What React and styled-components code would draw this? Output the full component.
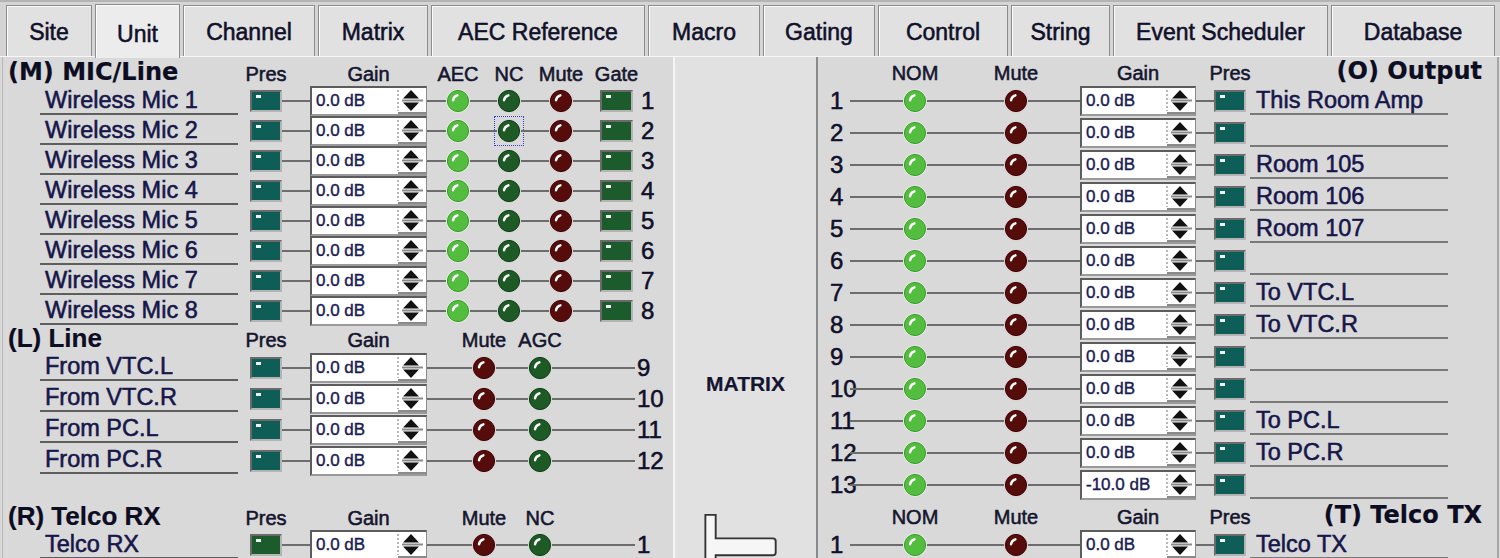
import React from "react";
import styled, { createGlobalStyle } from "styled-components";

const GlobalStyle = createGlobalStyle`
  html, body {
    margin: 0;
    padding: 0;
    background: #d9d9d9;
    overflow: hidden;
  }
  body {
    font-family: "Liberation Sans", Arial, sans-serif;
  }
`;

const TEXT = "#14143a";

const tabs = [
  { name: "Site", w: 86 },
  { name: "Unit", w: 85, active: true },
  { name: "Channel", w: 132 },
  { name: "Matrix", w: 110 },
  { name: "AEC Reference", w: 214 },
  { name: "Macro", w: 112 },
  { name: "Gating", w: 112 },
  { name: "Control", w: 130 },
  { name: "String", w: 99 },
  { name: "Event Scheduler", w: 215 },
  { name: "Database", w: 164 },
];

const micCols = [
  { t: "sq", w: 32, c: "teal", h: "Pres" },
  { t: "wire", w: 28 },
  { t: "gain", w: 117, h: "Gain" },
  { t: "wire", w: 19 },
  { t: "led", w: 24, c: "lime", h: "AEC" },
  { t: "wire", w: 27 },
  { t: "led", w: 24, c: "green", h: "NC" },
  { t: "wire", w: 28 },
  { t: "led", w: 24, c: "red", h: "Mute" },
  { t: "wire", w: 27 },
  { t: "sq", w: 33, c: "gate", h: "Gate" },
];

const lineCols = [
  { t: "sq", w: 32, c: "teal", h: "Pres" },
  { t: "wire", w: 28 },
  { t: "gain", w: 117, h: "Gain" },
  { t: "wire", w: 45 },
  { t: "led", w: 24, c: "red", h: "Mute" },
  { t: "wire", w: 32 },
  { t: "led", w: 24, c: "green", h: "AGC" },
  { t: "wire", w: 83 },
];

const telcoRxCols = [
  { t: "sq", w: 32, c: "gate", h: "Pres" },
  { t: "wire", w: 28 },
  { t: "gain", w: 117, h: "Gain" },
  { t: "wire", w: 45 },
  { t: "led", w: 24, c: "red", h: "Mute" },
  { t: "wire", w: 32 },
  { t: "led", w: 24, c: "green", h: "NC" },
  { t: "wire", w: 83 },
];

const outCols = [
  { t: "num", w: 20 },
  { t: "wire", w: 53 },
  { t: "led", w: 24, c: "lime", h: "NOM" },
  { t: "wire", w: 77 },
  { t: "led", w: 24, c: "red", h: "Mute" },
  { t: "wire", w: 52 },
  { t: "gain", w: 116, h: "Gain" },
  { t: "wire", w: 18 },
  { t: "sq", w: 32, c: "teal", h: "Pres" },
];

const micRows = [1, 2, 3, 4, 5, 6, 7, 8].map((n) => ({
  name: `Wireless Mic ${n}`,
  num: n,
}));

const lineRows = [
  { name: "From VTC.L", num: 9 },
  { name: "From VTC.R", num: 10 },
  { name: "From PC.L", num: 11 },
  { name: "From PC.R", num: 12 },
];

const outRows = [
  "This Room Amp",
  "",
  "Room 105",
  "Room 106",
  "Room 107",
  "",
  "To VTC.L",
  "To VTC.R",
  "",
  "",
  "To PC.L",
  "To PC.R",
  "",
].map((name, i) => ({ name, num: i + 1, gain: i === 12 ? "-10.0 dB" : "0.0 dB" }));

const ledColors = {
  lime: { fill: "#52bd3e", edge: "#3d9a2e", halo: "#e6f0e0" },
  green: { fill: "#1d5a26", edge: "#0f3a16", halo: "#cfd6cf" },
  red: { fill: "#570c0c", edge: "#360505", halo: "#dccdcd" },
};

const squareColors = {
  teal: "#0f5d57",
  gate: "#1c5b2c",
};

/* ---------- window + tabs ---------- */

const Window = styled.div`
  width: 1500px;
  height: 558px;
  overflow: hidden;
  display: flex;
  flex-direction: column;
  background: #d9d9d9;
  color: ${TEXT};
  -webkit-text-stroke: 0.55px;
`;

const TabStrip = styled.div`
  display: flex;
  align-items: flex-end;
  gap: 3px;
  height: 56px;
  box-sizing: border-box;
  padding: 0 0 0 6px;
  background: #d5d5d5;
  border-top: 2px solid #b4b4b4;
  flex-shrink: 0;
`;

const Tab = styled.div`
  width: ${(p) => p.$w}px;
  height: ${(p) => (p.$active ? 54 : 51)}px;
  margin-bottom: ${(p) => (p.$active ? -2 : 0)}px;
  position: relative;
  z-index: ${(p) => (p.$active ? 2 : 1)};
  box-sizing: border-box;
  display: flex;
  align-items: center;
  justify-content: center;
  padding-top: ${(p) => (p.$active ? 6 : 2)}px;
  font-size: 23px;
  color: #10102a;
  background: ${(p) => (p.$active ? "#ececec" : "#e1e1e1")};
  border: 1px solid #8c8c8c;
  border-bottom: none;
  box-shadow: inset 1px 1px 0 #fbfbfb;
`;

const Body = styled.div`
  flex: 1;
  display: flex;
  border-top: 1px solid #f7f7f7;
  min-height: 0;
`;

/* ---------- panels ---------- */

const LeftPanel = styled.div`
  width: 671px;
  margin-left: 2px;
  border-left: 1px solid #b8b8b8;
  box-sizing: border-box;
  display: flex;
  flex-direction: column;
  flex-shrink: 0;
`;

const MatrixPanel = styled.div`
  width: 145px;
  box-sizing: border-box;
  flex-shrink: 0;
  background: #e1e1e1;
  border-left: 2px solid #f4f4f4;
  border-right: 2px solid #8a8a8a;
  display: flex;
  flex-direction: column;
  align-items: center;
  padding-top: 315px;
`;

const MatrixTitle = styled.div`
  font-weight: bold;
  font-size: 21px;
  line-height: 24px;
  color: #151530;
  -webkit-text-stroke: 0.2px;
`;

const TeeShape = styled.svg`
  display: block;
  align-self: flex-start;
  margin: 117px 0 0 26px;
`;

const RightPanel = styled.div`
  flex: 1;
  box-sizing: border-box;
  padding-left: 12px;
  border-right: 2px solid #a6a6a6;
  margin-right: 1px;
  display: flex;
  flex-direction: column;
`;

/* ---------- sections ---------- */

const Section = styled.div`
  display: flex;
  flex-direction: column;
  margin-top: ${(p) => p.$mt || 0}px;
`;

const HeaderRow = styled.div`
  display: flex;
  align-items: flex-end;
  height: ${(p) => p.$h}px;
  padding-left: ${(p) => p.$pl || 0}px;
  flex-shrink: 0;
`;

const Title = styled.div`
  width: ${(p) => (p.$w ? `${p.$w}px` : "auto")};
  flex: ${(p) => (p.$w ? "0 0 auto" : "1")};
  text-align: ${(p) => (p.$right ? "right" : "left")};
  padding-right: ${(p) => (p.$right ? 15 : 0)}px;
  font-family: ${(p) =>
    p.$wide ? '"DejaVu Sans", Verdana, sans-serif' : '"Liberation Sans", Arial, sans-serif'};
  font-weight: bold;
  font-size: ${(p) => (p.$wide ? 24 : 26)}px;
  line-height: 27px;
  color: #0c0c22;
  white-space: nowrap;
  -webkit-text-stroke: 0.2px;
`;

const HeadCell = styled.div`
  width: ${(p) => p.$w}px;
  flex-shrink: 0;
  display: flex;
  justify-content: center;
  white-space: nowrap;
  font-size: 20px;
  line-height: 24px;
  color: #15152e;
`;

const Row = styled.div`
  display: flex;
  align-items: center;
  height: ${(p) => p.$h}px;
  padding-left: ${(p) => p.$pl || 0}px;
  flex-shrink: 0;
`;

const NameLabel = styled.div`
  width: 198px;
  height: 27px;
  box-sizing: border-box;
  flex-shrink: 0;
  margin: ${(p) => (p.$right ? "0 0 0 4px" : "0 12px 0 0")};
  padding-left: ${(p) => (p.$right ? 6 : 5)}px;
  border-bottom: 2px solid ${(p) => (p.$right ? "#7a7a7a" : "#5e5e5e")};
  font-size: 23.5px;
  line-height: 25px;
  color: #16164a;
  white-space: nowrap;
`;

const Wire = styled.div`
  width: ${(p) => p.$w}px;
  height: 2px;
  background: #6c6c6c;
  flex-shrink: 0;
`;

const Square = styled.div`
  width: ${(p) => p.$w}px;
  height: 22px;
  box-sizing: border-box;
  flex-shrink: 0;
  position: relative;
  background: ${(p) => squareColors[p.$tone]};
  border-style: solid;
  border-width: 2px;
  border-color: #6a6a6a #b4b4b4 #b4b4b4 #6a6a6a;
  &::after {
    content: "";
    position: absolute;
    left: 4px;
    top: 3px;
    width: 5px;
    height: 3px;
    background: #f2f2f2;
  }
`;

const LedWrap = styled.span`
  display: block;
  width: ${(p) => p.$size}px;
  height: ${(p) => p.$size}px;
  flex-shrink: 0;
  outline: ${(p) => (p.$focus ? "1.5px dotted #3a3ad0" : "none")};
  outline-offset: 2px;
  & svg {
    display: block;
  }
`;

const RowNum = styled.div`
  width: ${(p) => p.$w || 30}px;
  margin-left: ${(p) => p.$ml || 0}px;
  flex-shrink: 0;
  font-size: 24px;
  line-height: 26px;
  color: #10102a;
  white-space: nowrap;
`;

const GainField = styled.div`
  width: ${(p) => p.$w}px;
  height: 30px;
  box-sizing: border-box;
  flex-shrink: 0;
  display: flex;
  align-items: center;
  justify-content: space-between;
  background: #fff;
  border-style: solid;
  border-width: 2px 1px 2px 2px;
  border-color: #5c5c5c #8c8c8c #9a9a9a #5c5c5c;
  padding-left: 4px;
  font-size: 17px;
  color: #1b1b55;
  white-space: nowrap;
  -webkit-text-stroke: 0.4px;
  & svg {
    display: block;
    flex-shrink: 0;
  }
`;

/* ---------- parts ---------- */

const Led = ({ tone, focus, size }) => {
  const c = ledColors[tone];
  return (
    <LedWrap $focus={focus} $size={size}>
      <svg width={size} height={size} viewBox="0 0 24 24">
        <circle cx="12" cy="12" r="11.8" fill={c.halo} />
        <circle cx="12" cy="12" r="10.6" fill={c.fill} stroke={c.edge} strokeWidth="1" />
        <path
          d="M7 11.2 Q7.6 7.4 11.4 6.3"
          fill="none"
          stroke="#ffffff"
          strokeWidth="2.4"
          strokeLinecap="round"
        />
      </svg>
    </LedWrap>
  );
};

const GainBox = ({ w, value }) => (
  <GainField $w={w}>
    <span>{value}</span>
    <svg width="30" height="26" viewBox="0 0 30 26">
      <line x1="2" y1="2" x2="2" y2="23" stroke="#a0a0a0" strokeWidth="1.5" strokeDasharray="2 2" />
      <path d="M15 2 L23 10.5 L7 10.5 Z" fill="#111" />
      <line x1="6" y1="12.5" x2="27" y2="12.5" stroke="#8a8a8a" strokeWidth="2" />
      <path d="M7 14.5 L23 14.5 L15 23 Z" fill="#111" />
      <line x1="2" y1="25" x2="30" y2="25" stroke="#8a8a8a" strokeWidth="2" />
    </svg>
  </GainField>
);

const renderCell = (col, i, ctx) => {
  switch (col.t) {
    case "wire":
      return <Wire key={i} $w={col.w} />;
    case "sq":
      return <Square key={i} $w={col.w} $tone={col.c} />;
    case "gain":
      return <GainBox key={i} w={col.w} value={ctx.gain || "0.0 dB"} />;
    case "led":
      return <Led key={i} tone={col.c} size={col.w} focus={ctx.focus === i} />;
    case "num":
      return (
        <RowNum key={i} $w={col.w}>
          {ctx.num}
        </RowNum>
      );
    default:
      return null;
  }
};

const HeaderCells = ({ cols }) =>
  cols.map((c, i) => (
    <HeadCell key={i} $w={c.w}>
      {c.h || ""}
    </HeadCell>
  ));

const InputSection = ({ title, wide, cols, rows, headH, rowH, mt, numGap }) => (
  <Section $mt={mt}>
    <HeaderRow $h={headH} $pl={5}>
      <Title $w={242} $wide={wide}>
        {title}
      </Title>
      <HeaderCells cols={cols} />
    </HeaderRow>
    {rows.map((r) => (
      <Row key={r.name} $h={rowH} $pl={37}>
        <NameLabel>{r.name}</NameLabel>
        {cols.map((c, i) => renderCell(c, i, r))}
        <RowNum $ml={numGap}>{r.num}</RowNum>
      </Row>
    ))}
  </Section>
);

const OutputSection = ({ title, rows, rowH, headH }) => (
  <Section>
    <HeaderRow $h={headH}>
      <HeaderCells cols={outCols} />
      <Title $right $wide>
        {title}
      </Title>
    </HeaderRow>
    {rows.map((r) => (
      <Row key={r.num + r.name} $h={rowH}>
        {outCols.map((c, i) => renderCell(c, i, r))}
        <NameLabel $right>{r.name}</NameLabel>
      </Row>
    ))}
  </Section>
);

export default function App() {
  const mic = micRows.map((r) => (r.num === 2 ? { ...r, focus: 6 } : r));

  return (
    <Window>
      <GlobalStyle />
      <TabStrip>
        {tabs.map((t) => (
          <Tab key={t.name} $w={t.w} $active={t.active}>
            {t.name}
          </Tab>
        ))}
      </TabStrip>
      <Body>
        <LeftPanel>
          <InputSection
            title="(M) MIC/Line"
            wide
            cols={micCols}
            rows={mic}
            headH={29}
            rowH={30}
            numGap={8}
          />
          <InputSection
            title="(L) Line"
            cols={lineCols}
            rows={lineRows}
            headH={26}
            rowH={31}
            numGap={2}
          />
          <InputSection
            title="(R) Telco RX"
            cols={telcoRxCols}
            rows={[{ name: "Telco RX", num: 1 }]}
            headH={26}
            rowH={30}
            mt={28}
            numGap={2}
          />
        </LeftPanel>
        <MatrixPanel>
          <MatrixTitle>MATRIX</MatrixTitle>
          <TeeShape width="80" height="48" viewBox="0 0 80 48">
            <path
              d="M2 48 L2 2 L13 2 L13 27 L74 27 Q77 27 77 30 L77 42 Q77 45 74 45 L13 45 L13 48"
              fill="#f6f6f6"
              stroke="#333"
              strokeWidth="2"
            />
          </TeeShape>
        </MatrixPanel>
        <RightPanel>
          <OutputSection title="(O) Output" rows={outRows} rowH={32} headH={28} />
          <OutputSection
            title="(T) Telco TX"
            rows={[{ name: "Telco TX", num: 1, gain: "0.0 dB" }]}
            rowH={32}
            headH={28}
          />
        </RightPanel>
      </Body>
    </Window>
  );
}
